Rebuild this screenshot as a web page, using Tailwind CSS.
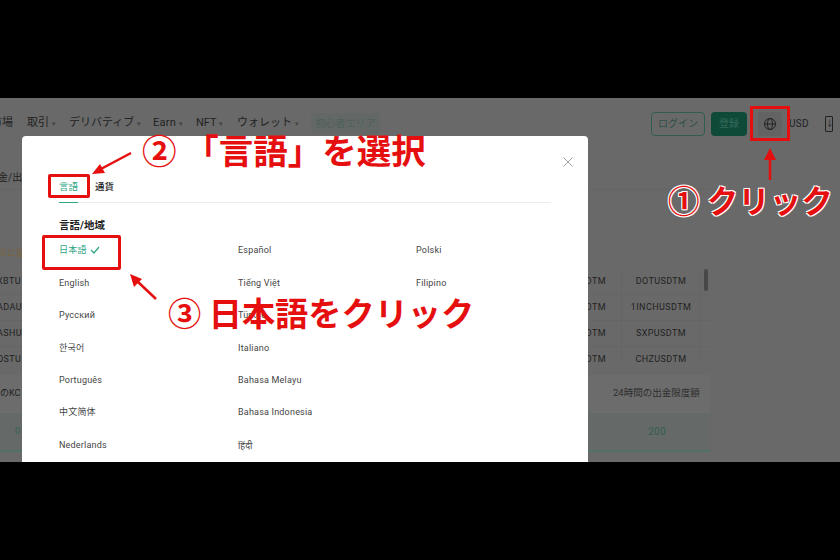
<!DOCTYPE html>
<html lang="ja">
<head>
    <meta charset="UTF-8">
    <title>言語を選択</title>
    <script src="https://cdn.jsdelivr.net/npm/@tailwindcss/browser@4"></script>
</head>
<body class="bg-black font-['Roboto','Noto_Sans_CJK_JP',sans-serif]">
    <div class="h-[560px] w-[840px] py-[98px] overflow-hidden">
        <div class="relative h-[364px] bg-[#696969] overflow-hidden">

            <!-- Navbar (dimmed) -->
            <nav class="flex items-center h-[50px] pt-[1px] text-[11px] text-[#222] w-[840px]">
                <span class="ml-[-9px] w-[36px]">市場</span>
                <span class="w-[42px]">取引 <i class="not-italic text-[7px] text-[#444]">▾</i></span>
                <span class="w-[84px]">デリバティブ <i class="not-italic text-[7px] text-[#444]">▾</i></span>
                <span class="w-[43px] tracking-[0.3px]">Earn <i class="not-italic text-[7px] text-[#444]">▾</i></span>
                <span class="w-[41px]">NFT <i class="not-italic text-[7px] text-[#444]">▾</i></span>
                <span class="w-[74px]">ウォレット <i class="not-italic text-[7px] text-[#444]">▾</i></span>
                <span class="w-[69px] h-[21px] rounded bg-[#636866] text-[#4d6158] text-[10px] flex items-center justify-center">初心者エリア</span>
                <span class="ml-[271px] w-[54px] h-[24px] rounded-sm border border-[#2f5e50] text-[#2f5046] text-[10px] flex items-center justify-center">ログイン</span>
                <span class="ml-[6px] w-[36px] h-[24px] rounded-sm bg-[#0f4a39] text-[#35685a] text-[10px] flex items-center justify-center">登録</span>
                <span class="ml-[11px] w-[24px] h-[24px] rounded bg-[#636363] flex items-center justify-center">
                    <svg width="14" height="14" viewBox="0 0 14 14" fill="none" stroke="#222" stroke-width="1">
                        <circle cx="7" cy="7" r="5.5"/><ellipse cx="7" cy="7" rx="2.5" ry="5.5"/><path d="M1.5 7h11"/>
                    </svg>
                </span>
                <span class="ml-[7px] text-[10px] tracking-wide">USD</span>
                <span class="ml-[16px] w-[8px] h-[16px] rounded-[1px] border border-[#222] text-[8px] leading-[14px] text-center">↓</span>
            </nav>

            <!-- Page behind the modal -->
            <div class="w-[710px] text-[9px] text-[#222]">
                <div class="mt-[22px] h-[20px] border-b border-[#656565] ml-[-2px] text-[10px]">金/出</div>
                <div class="mt-[57px] h-[12px] leading-[12px] text-[#7d6238] ml-[-2px]">スに従</div>

                <div class="relative mt-[10px] h-[93px] overflow-hidden tracking-[0.4px]">
                    <div class="flex h-[26px] items-center justify-between border-b border-[#656565]"><span class="ml-[-3px]">XBTU</span><span class="ml-auto mr-[15px]">DTM</span><span class="self-stretch w-[80px] mr-[9px] border-x border-[#656565] flex items-center justify-center">DOTUSDTM</span></div>
                    <div class="flex h-[26px] items-center justify-between border-b border-[#656565]"><span class="ml-[-3px]">ADAUS</span><span class="ml-auto mr-[15px]">DTM</span><span class="self-stretch w-[80px] mr-[9px] border-x border-[#656565] flex items-center justify-center">1INCHUSDTM</span></div>
                    <div class="flex h-[26px] items-center justify-between border-b border-[#656565]"><span class="ml-[-3px]">ASHU</span><span class="ml-auto mr-[15px]">DTM</span><span class="self-stretch w-[80px] mr-[9px] border-x border-[#656565] flex items-center justify-center">SXPUSDTM</span></div>
                    <div class="flex h-[26px] items-center justify-between"><span class="ml-[-3px]">OSTU</span><span class="ml-auto mr-[15px]">DTM</span><span class="self-stretch w-[80px] mr-[9px] border-x border-[#656565] flex items-center justify-center">CHZUSDTM</span></div>
                    <div class="absolute right-[2px] top-0 w-[4px] h-[22px] rounded-full bg-[#484848]"></div>
                </div>

                <div class="mt-[13px] flex h-[37px] items-center justify-between bg-[#6c6c6c]"><span>のKC</span><span class="w-[97px] text-[9.5px] text-[#2e2e2e]">24時間の出金限度額</span></div>
                <div class="flex h-[40px] items-center justify-between bg-[#656967] border-t border-[#66706c] border-b-2 border-b-[#4f7264] text-[#336050]"><span class="ml-[15px]">0</span><span class="self-stretch w-[107px] border-l border-[#646b68] flex items-center justify-center text-[10px] tracking-wide">200</span></div>
            </div>

            <!-- Modal -->
            <div class="absolute left-[22px] top-[38px] w-[566px] h-[340px] bg-white rounded-t px-[37px] text-[#2b2b2b]">
                <div class="flex gap-[17px] h-[67px] pt-[44px] border-b border-[#ebebeb] w-[492px] text-[9.5px] leading-[13px]">
                    <span class="relative h-[23px] text-[#2ba583]">言語<i class="absolute left-0 right-0 bottom-0 h-[1.5px] bg-[#2ba583]"></i></span>
                    <span class="font-medium text-[#222]">通貨</span>
                </div>
                <h3 class="mt-[15px] h-[14px] text-[10.5px] leading-[16px] font-bold text-[#222]">言語/地域</h3>
                <div class="grid grid-cols-[179px_178px_1fr] auto-rows-[32.4px] mt-[3px] text-[9px] tracking-[0.2px] items-center text-[#444]">
                    <span class="text-[#2ba583] flex items-center gap-[3px]">日本語
                        <svg class="-mt-[2px]" width="10" height="8" viewBox="0 0 10 8" fill="none" stroke="#2ba583" stroke-width="1.2"><path d="M1 4l3 3 5-6"/></svg>
                    </span>
                    <span>Español</span><span>Polski</span>
                    <span>English</span><span>Tiếng Việt</span><span>Filipino</span>
                    <span>Русский</span><span>Türkçe</span><span></span>
                    <span>한국어</span><span>Italiano</span><span></span>
                    <span>Português</span><span>Bahasa Melayu</span><span></span>
                    <span>中文简体</span><span>Bahasa Indonesia</span><span></span>
                    <span>Nederlands</span><span class="font-['Noto_Sans','DejaVu_Sans',sans-serif]">हिंदी</span><span></span>
                </div>
                <svg class="absolute left-[541px] top-[21px]" width="10" height="10" viewBox="0 0 10 10" stroke="#8a8a8a" stroke-width="0.8"><path d="M0.5 0.5l9 9M9.5 0.5l-9 9"/></svg>
            </div>

            <!-- Annotations -->
            <div class="absolute left-[48px] top-[76px] w-[42px] h-[24px] border-[3px] border-[#e60f0f] rounded-[2px]"></div>
            <div class="absolute left-[42px] top-[137px] w-[79px] h-[35px] border-[3px] border-[#e60f0f] rounded-[2px]"></div>
            <div class="absolute left-[750px] top-[8px] w-[40px] h-[35px] border-[3px] border-[#e60f0f]"></div>

            <svg class="absolute left-0 top-0" width="840" height="364" fill="#e60f0f" stroke="#e60f0f" stroke-width="2.5">
                <path d="M131 55L99 72"/><path stroke="none" d="M92 76l13-1-5-9z"/>
                <path d="M156 201L137 183"/><path stroke="none" d="M130 176l4 13 8-8z"/>
                <path d="M770 82V58"/><path stroke="none" d="M770 50l-6 12h12z"/>
            </svg>

            <p class="absolute left-[142px] top-[31px] text-[34.5px] leading-[40px] font-bold text-[#e60f0f] font-['Noto_Sans_CJK_JP',sans-serif] whitespace-pre">② 「言語」を選択</p>
            <p class="absolute left-[168px] top-[194px] text-[33.2px] leading-[40px] font-bold text-[#e60f0f] font-['Noto_Sans_CJK_JP',sans-serif] whitespace-pre">③ 日本語をクリック</p>
            <p class="absolute left-[668px] top-[82px] text-[31.5px] leading-[38px] font-bold text-[#e60f0f] font-['Noto_Sans_CJK_JP',sans-serif] whitespace-pre [text-shadow:1px_1px_0_#fff,-1px_-1px_0_#fff,1px_-1px_0_#fff,-1px_1px_0_#fff]">① クリック</p>
        </div>
    </div>
</body>
</html>
